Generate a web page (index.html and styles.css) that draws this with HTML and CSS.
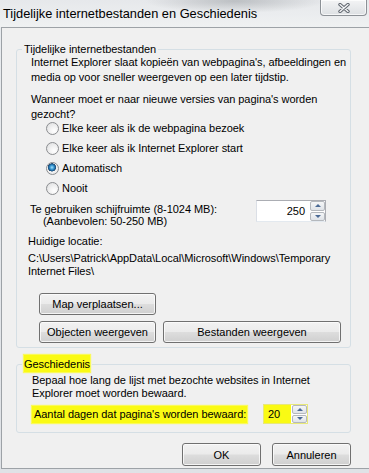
FILE: index.html
```html
<!DOCTYPE html>
<html>
	<head>
		<meta charset="utf-8">
		<title>Tijdelijke internetbestanden en Geschiedenis</title>
		<link rel="stylesheet" href="styles.css">
	</head>
	<body>
		<div class="window">
			<div class="titlebar">
				<span class="title">Tijdelijke internetbestanden en Geschiedenis</span>
				<div class="close-btn">
					<svg width="12" height="10" viewBox="0 0 12 10">
						<path d="M2 1.5 L10 8.5 M10 1.5 L2 8.5" stroke="#5f656d" stroke-width="3.4" stroke-linecap="round"/>
						<path d="M2 1.5 L10 8.5 M10 1.5 L2 8.5" stroke="#f4f5f7" stroke-width="1.4" stroke-linecap="round"/>
					</svg>
				</div>
			</div>
			<div class="client">
				<fieldset class="group group-cache">
					<legend>Tijdelijke internetbestanden</legend>
					<p class="intro">Internet Explorer slaat kopieën van webpagina's, afbeeldingen en<br>media op voor sneller weergeven op een later tijdstip.</p>
					<p class="question">Wanneer moet er naar nieuwe versies van pagina's worden<br>gezocht?</p>
					<ul class="radio-list">
						<li><span class="radio"></span>Elke keer als ik de webpagina bezoek</li>
						<li><span class="radio"></span>Elke keer als ik Internet Explorer start</li>
						<li><span class="radio checked"></span>Automatisch</li>
						<li><span class="radio"></span>Nooit</li>
					</ul>
					<div class="space-row">
						<div class="space-label">
							<div>Te gebruiken schijfruimte (8-1024 MB):</div>
							<div class="sub">(Aanbevolen: 50-250 MB)</div>
						</div>
						<div class="spinner spinner-space">
							<span class="spin-value">250</span>
							<span class="spin-arrows">
								<span class="spin-up"></span>
								<span class="spin-down"></span>
							</span>
						</div>
					</div>
					<div class="location-label">Huidige locatie:</div>
					<div class="location-path">C:\Users\Patrick\AppData\Local\Microsoft\Windows\Temporary<br>Internet Files\</div>
					<div class="btn-row first">
						<button class="btn btn-small">Map verplaatsen...</button>
					</div>
					<div class="btn-row">
						<button class="btn btn-small">Objecten weergeven</button>
						<button class="btn btn-wide">Bestanden weergeven</button>
					</div>
				</fieldset>

				<fieldset class="group group-history">
					<legend><span class="marker">Geschiedenis</span></legend>
					<p class="history-info">Bepaal hoe lang de lijst met bezochte websites in Internet<br>Explorer moet worden bewaard.</p>
					<div class="days-row">
						<span class="marker days-label">Aantal dagen dat pagina's worden bewaard:</span>
						<div class="spinner spinner-days">
							<span class="spin-value">20</span>
							<span class="spin-arrows">
								<span class="spin-up"></span>
								<span class="spin-down"></span>
							</span>
						</div>
					</div>
				</fieldset>

				<div class="dialog-buttons">
					<button class="btn btn-dialog">OK</button>
					<button class="btn btn-dialog">Annuleren</button>
				</div>
			</div>
		</div>
	</body>
</html>
```

FILE: styles.css
```css
body{
	margin: 0;
	background: #e2e5e9;
	font-family: "Liberation Sans", Arial, sans-serif;
	font-size: 11px;
	letter-spacing: -0.05px;
	color: #000;
}
.window{
	width: 369px;
	height: 473px;
	overflow: hidden;
	background: linear-gradient(to bottom, #e9ecef, #dfe2e6);
}
.titlebar{
	height: 27px;
	display: flex;
	justify-content: space-between;
	align-items: flex-start;
	background:
		radial-gradient(ellipse 90px 12px at 235px 1px, rgba(110,115,120,0.35), rgba(110,115,120,0)),
		linear-gradient(to bottom, #e6e8eb, #eff1f2);
}
.title{
	font-size: 12.8px;
	line-height: 27px;
	padding-left: 3px;
	letter-spacing: 0;
}
.close-btn{
	width: 45px;
	height: 15px;
	margin-right: 2px;
	border: 1px solid #8c9196;
	border-top: none;
	border-radius: 0 0 4px 4px;
	background: linear-gradient(to bottom, #f3f4f5, #dde0e3);
	box-shadow: inset 0 0 0 1px rgba(255,255,255,0.7);
	display: flex;
	align-items: center;
	justify-content: center;
}
.client{
	margin-left: 1px;
	height: 440px;
	border: 1px solid #9da2a7;
	border-right: none;
	background: #f0f0f0;
}
.group{
	box-sizing: border-box;
	width: 335px;
	min-width: 0;
	margin: 14px 0 0 14px;
	padding: 0 0 4px 0;
	border: 1px solid #d5dfe5;
	border-radius: 3px;
}
.group legend{
	margin-left: 5px;
	padding: 0 2px;
	line-height: 15px;
}
.group-cache p,.group-history p{
	margin: 0;
	line-height: 15px;
}
.intro{
	margin: -2px 0 0 14px !important;
}
.question{
	margin: 7px 0 0 14px !important;
}
.radio-list{
	list-style: none;
	margin: -4px 0 0 29px;
	padding: 0;
}
.radio-list li{
	height: 20px;
	display: flex;
	align-items: center;
}
.radio{
	box-sizing: border-box;
	width: 13px;
	height: 13px;
	margin-right: 3px;
	border-radius: 50%;
	border: 1px solid #8b8d90;
	background: radial-gradient(circle at 65% 70%, #ffffff 0, #f4f4f4 35%, #d9dadb 100%);
}
.radio.checked{
	background: radial-gradient(circle at 45% 40%, #a8e1fb 0, #3a9ad4 22%, #1a5a8e 38%, #2a4f74 44%, #f3f3f3 48%, #e0e0e1 100%);
}
.space-row{
	display: flex;
	align-items: flex-start;
}
.space-label{
	margin: 5px 0 0 13px;
	line-height: 12px;
}
.space-label .sub{
	padding-left: 13px;
}
.spinner{
	box-sizing: border-box;
	display: flex;
	background: #fff;
	border: 1px solid #abadb3;
	border-left-color: #dbdfe6;
	border-bottom-color: #e3e9ef;
}
.spinner-space{
	width: 70px;
	height: 22px;
	margin: 2px 24px 0 auto;
}
.spin-value{
	flex: 1;
	text-align: right;
	padding-right: 4px;
	line-height: 20px;
}
.spin-arrows{
	width: 15px;
	display: flex;
	flex-direction: column;
	gap: 1px;
	padding: 0 0 0 1px;
}
.spin-up,.spin-down{
	flex: 1;
	border: 1px solid #b4b8bd;
	border-radius: 2px;
	background: linear-gradient(to bottom, #f5f6f7, #dfe3e8);
	display: flex;
	align-items: center;
	justify-content: center;
}
.spin-up:after{
	content: "";
	border-left: 3px solid transparent;
	border-right: 3px solid transparent;
	border-bottom: 3px solid #4b6a95;
}
.spin-down:after{
	content: "";
	border-left: 3px solid transparent;
	border-right: 3px solid transparent;
	border-top: 3px solid #4b6a95;
}
.location-label{
	margin: 7px 0 0 11px;
	line-height: 15px;
}
.location-path{
	margin: 3px 0 0 11px;
	line-height: 13px;
}
.btn-row{
	display: flex;
	gap: 7px;
	margin: 6px 0 0 22px;
}
.btn-row.first{
	margin-top: 15px;
}
.btn{
	box-sizing: border-box;
	height: 22px;
	padding: 0;
	font-family: "Liberation Sans", Arial, sans-serif;
	font-size: 11px;
	color: #000;
	border: 1px solid #707070;
	border-radius: 3px;
	background: linear-gradient(to bottom, #f2f2f2 0%, #ebebeb 48%, #dddddd 52%, #cfcfcf 100%);
	box-shadow: inset 0 0 0 1px rgba(252,252,252,0.8);
}
.btn-small{
	width: 117px;
}
.btn-wide{
	width: 178px;
}
.group-history{
	margin-top: 9px;
	padding-bottom: 8px;
}
.marker{
	background: #fafa14;
	box-shadow: 0 0 1px 1px #fafa5a;
}
.group-history legend .marker{
	padding: 3px 0 2px;
}
.history-info{
	margin: 2px 0 0 15px !important;
	line-height: 13px !important;
}
.days-row{
	display: flex;
	align-items: center;
	margin: 4px 0 0 15px;
}
.days-label{
	flex-shrink: 0;
	white-space: nowrap;
	width: 215px;
	height: 17px;
	padding-left: 2px;
	box-sizing: border-box;
	line-height: 17px;
}
.spinner-days{
	flex-shrink: 0;
	width: 45px;
	height: 20px;
	margin: 0 0 0 16px;
	background: #fafa14;
	border-color: #e8e87a;
}
.spinner-days .spin-value{
	text-align: left;
	padding-left: 4px;
	line-height: 18px;
}
.spinner-days .spin-arrows{
	background: #fff;
}
.dialog-buttons{
	display: flex;
	justify-content: flex-end;
	gap: 11px;
	margin: 10px 18px 0 0;
}
.btn-dialog{
	width: 79px;
	height: 23px;
}
```
